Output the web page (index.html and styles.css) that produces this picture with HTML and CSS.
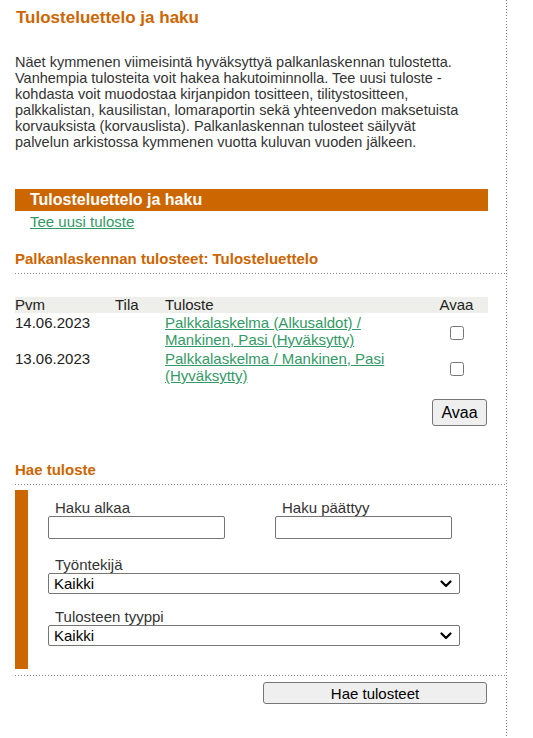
FILE: index.html
```html
<!DOCTYPE html>
<html lang="fi">
<head>
<meta charset="utf-8">
<title>Tulosteluettelo ja haku</title>
<link rel="stylesheet" href="styles.css">
</head>
<body>
<div class="page">
  <main class="main">
    <h1 class="title">Tulosteluettelo ja haku</h1>
    <p class="intro">Näet kymmenen viimeisintä hyväksyttyä palkanlaskennan tulostetta. Vanhempia tulosteita voit hakea hakutoiminnolla. Tee uusi tuloste -kohdasta voit muodostaa kirjanpidon tositteen, tilitystositteen, palkkalistan, kausilistan, lomaraportin sekä yhteenvedon maksetuista korvauksista (korvauslista). Palkanlaskennan tulosteet säilyvät palvelun arkistossa kymmenen vuotta kuluvan vuoden jälkeen.</p>

    <div class="tabbar">Tulosteluettelo ja haku</div>
    <div class="subnav"><a class="link" href="#">Tee uusi tuloste</a></div>

    <h2 class="section list-head">Palkanlaskennan tulosteet: Tulosteluettelo</h2>

    <table class="list">
      <colgroup>
        <col class="c-pvm"><col class="c-tila"><col class="c-tuloste"><col class="c-avaa">
      </colgroup>
      <thead>
        <tr><th>Pvm</th><th>Tila</th><th>Tuloste</th><th class="center">Avaa</th></tr>
      </thead>
      <tbody>
        <tr>
          <td>14.06.2023</td><td></td>
          <td><a class="link" href="#">Palkkalaskelma (Alkusaldot) / Mankinen, Pasi (Hyväksytty)</a></td>
          <td class="center"><input type="checkbox" class="check"></td>
        </tr>
        <tr>
          <td>13.06.2023</td><td></td>
          <td><a class="link" href="#">Palkkalaskelma / Mankinen, Pasi (Hyväksytty)</a></td>
          <td class="center"><input type="checkbox" class="check"></td>
        </tr>
      </tbody>
    </table>

    <div class="actions"><button class="btn btn-open" type="button">Avaa</button></div>

    <h2 class="section search-head">Hae tuloste</h2>

    <div class="search">
      <div class="daterow">
        <label class="field"><span class="label">Haku alkaa</span><input class="textin" type="text"></label>
        <label class="field"><span class="label">Haku päättyy</span><input class="textin" type="text"></label>
      </div>
      <label class="field field-wide first"><span class="label">Työntekijä</span>
        <span class="selwrap"><select class="sel"><option>Kaikki</option></select><svg class="chev" width="12" height="8" viewBox="0 0 12 8"><path d="M1.5 1.5 L6 6 L10.5 1.5" fill="none" stroke="#000" stroke-width="2.2" stroke-linecap="round" stroke-linejoin="round"/></svg></span></label>
      <label class="field field-wide second"><span class="label">Tulosteen tyyppi</span>
        <span class="selwrap"><select class="sel"><option>Kaikki</option></select><svg class="chev" width="12" height="8" viewBox="0 0 12 8"><path d="M1.5 1.5 L6 6 L10.5 1.5" fill="none" stroke="#000" stroke-width="2.2" stroke-linecap="round" stroke-linejoin="round"/></svg></span></label>
    </div>

    <div class="footer"><button class="btn btn-search" type="button">Hae tulosteet</button></div>
  </main>
</div>
</body>
</html>
```
FILE: styles.css
```css
html, body {
  margin: 0;
  padding: 0;
  background: #fff;
}
body {
  font-family: "Liberation Sans", Arial, sans-serif;
  color: #333;
}
.page {
  display: flex;
  min-height: 100vh;
}
.main {
  margin-left: 15px;
  width: 492px;
  min-height: 100vh;
  background-image: linear-gradient(to bottom, #8a8a8a 1px, transparent 1px);
  background-size: 1px 3px;
  background-repeat: repeat-y;
  background-position: right top;
}
.title {
  margin: 0;
  padding: 8px 0 0 1px;
  font-size: 17px;
  line-height: 20px;
  font-weight: bold;
  color: #cc6600;
}
.intro {
  margin: 26px 0 0;
  width: 456px;
  font-size: 14.5px;
  line-height: 16px;
}
.tabbar {
  margin-top: 39px;
  width: 473px;
  height: 22px;
  box-sizing: border-box;
  padding-left: 15px;
  background: #cc6600;
  color: #fff;
  font-size: 16px;
  line-height: 22px;
  font-weight: bold;
}
.subnav {
  margin-top: 2px;
  padding-left: 15px;
  font-size: 15px;
  line-height: 17px;
}
.link {
  color: #339966;
  text-decoration: underline;
}
.section {
  margin: 0;
  font-size: 15px;
  line-height: 17px;
  font-weight: bold;
  color: #cc6600;
  padding-bottom: 7px;
  background-image: linear-gradient(to right, #8a8a8a 1px, transparent 1px);
  background-size: 3px 1px;
  background-repeat: repeat-x;
  background-position: left bottom;
}
.list-head {
  margin-top: 20px;
}
.list {
  margin-top: 23px;
  width: 473px;
  border-collapse: collapse;
  table-layout: fixed;
  font-size: 15px;
  color: #222;
}
.c-pvm { width: 100px; }
.c-tila { width: 50px; }
.c-tuloste { width: 260px; }
.c-avaa { width: 63px; }
.list th {
  background: #eeeeea;
  font-weight: normal;
  text-align: left;
  padding: 0;
  line-height: 16px;
  height: 16px;
}
.list td {
  padding: 1px 0;
  line-height: 17px;
  vertical-align: top;
}
.list td.center {
  vertical-align: middle;
}
.list .center {
  text-align: center;
}
.check {
  margin: 0;
  width: 14px;
  height: 14px;
  vertical-align: middle;
}
.actions {
  margin-top: 14px;
  width: 473px;
  display: flex;
  justify-content: flex-end;
}
.btn {
  font-family: "Liberation Sans", Arial, sans-serif;
  background: #efefef;
  color: #000;
  border: 1px solid #767676;
  border-radius: 3px;
  box-sizing: border-box;
  padding: 0;
  margin: 0;
}
.btn-open {
  width: 55px;
  height: 27px;
  font-size: 16px;
  margin-right: 1px;
}
.search-head {
  margin-top: 35px;
}
.search {
  margin-top: 5px;
  width: 473px;
  box-sizing: border-box;
  border-left: 13px solid #cc6600;
  padding: 9px 0 23px 20px;
}
.daterow {
  display: flex;
  gap: 50px;
}
.field {
  display: flex;
  flex-direction: column;
}
.label {
  display: block;
  padding-left: 7px;
  font-size: 15px;
  line-height: 17px;
  color: #333;
}
.textin {
  box-sizing: border-box;
  width: 177px;
  height: 23px;
  margin: 0;
  border: 1px solid #767676;
  border-radius: 2px;
  font-family: "Liberation Sans", Arial, sans-serif;
  font-size: 15px;
}
.field-wide.first {
  margin-top: 17px;
}
.field-wide.second {
  margin-top: 14px;
}
.selwrap {
  position: relative;
  display: block;
  width: 412px;
  height: 21px;
}
.sel {
  -webkit-appearance: none;
  appearance: none;
  box-sizing: border-box;
  display: block;
  width: 412px;
  height: 21px;
  margin: 0;
  padding: 0 0 0 5px;
  border: 1px solid #767676;
  border-radius: 2px;
  background: #fff;
  color: #000;
  font-family: "Liberation Sans", Arial, sans-serif;
  font-size: 15px;
  line-height: 19px;
}
.chev {
  position: absolute;
  right: 8px;
  top: 7px;
  pointer-events: none;
}
.footer {
  margin-top: 6px;
  padding-top: 7px;
  width: 492px;
  background-image: linear-gradient(to right, #8a8a8a 1px, transparent 1px);
  background-size: 3px 1px;
  background-repeat: repeat-x;
  background-position: left top;
}
.footer .btn-search {
  display: block;
  margin-left: 248px;
  width: 224px;
  height: 22px;
  font-size: 15px;
}
```
